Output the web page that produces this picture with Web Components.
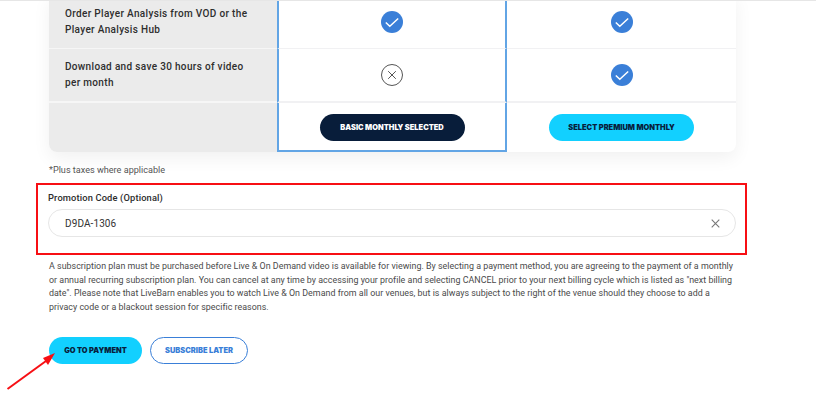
<!DOCTYPE html>
<html><head><meta charset="utf-8"><style>
html,body{margin:0;height:414px;overflow:hidden;background:#fff;font-family:Roboto,sans-serif}
</style></head><body>
<plan-page></plan-page>
<script>
const def=(n,h,init)=>customElements.define(n,class extends HTMLElement{constructor(){super();this.attachShadow({mode:'open'}).innerHTML=h;}connectedCallback(){init&&init(this)}});
const CHECK=`<svg width="22" height="22" viewBox="0 0 22 22"><circle cx="11" cy="11" r="11" fill="#3a7fd8"/><path d="M4.800 11.500l4 3.800 8.400-7.800" fill="none" stroke="#fff" stroke-width="1.500"/></svg>`;
const CROSS=`<svg width="22" height="22" viewBox="0 0 22 22"><circle cx="11" cy="11" r="10.500" fill="#fff" stroke="#555" stroke-width="1"/><path d="M7.200 7.200l7.600 7.600M14.800 7.200l-7.600 7.600" fill="none" stroke="#555" stroke-width="1"/></svg>`;
def('lb-mark',`<style>:host{display:inline-flex}</style><span id="i" style="display:inline-flex"></span>`,e=>{e.shadowRoot.getElementById('i').innerHTML=e.getAttribute('type')==='cross'?CROSS:CHECK});
def('lb-button',`<style>
:host{display:inline-flex;align-items:center;justify-content:center;box-sizing:border-box;height:27px;border-radius:14px;font:900 7.450px Inter,sans-serif;white-space:nowrap;background:#12d0ff;color:#08203c}
:host([kind=dark]){background:#081d3a;color:#fff}
:host([kind=outline]){background:#fff;color:#3a7fd8;border:1.500px solid #3a7fd8}
</style><slot></slot>`);
def('plan-row',`<style>
:host{display:grid;grid-template-columns:228px 230px 229px;height:var(--h,48px)}
.l{background:#ebebeb;padding:0 20px 0 16px;display:flex;align-items:center;font:500 10px/16px Roboto,sans-serif;letter-spacing:.33px;color:#2e2e2e;border-bottom:var(--b,1px) solid #f6f6f6}
.c{display:flex;align-items:center;justify-content:center;border-bottom:var(--b,1px) solid #f1f1f3}
.m{border-left:2px solid #62a5e5;border-right:2px solid #62a5e5}
:host([last]) .l,:host([last]) .c{border-bottom:0}
:host([last]) .l{border-bottom-left-radius:8px}
:host([last]) .m{border-bottom:2px solid #62a5e5;padding-top:2px}
</style><div class="l"><slot name="label"></slot></div><div class="c m"><slot name="basic"></slot></div><div class="c"><slot name="premium"></slot></div>`);
def('plan-table',`<style>
:host{display:block;width:687px;margin-top:-5px;background:#fff;border-radius:0 0 8px 8px;box-shadow:0 6px 18px rgba(0,0,0,.06)}
</style><slot></slot>`);
def('promo-field',`<style>
:host{display:block;box-sizing:border-box;margin:0 -11px 0 -13px;height:72px;border:2px solid #f70f14;padding:6px 9px 0 10px}
.t{font:500 9.300px/13px Roboto,sans-serif;letter-spacing:.15px;color:#2c2c2c}
.f{margin-top:5px;box-sizing:border-box;height:28px;border:1px solid #e6e6e6;border-radius:14px;display:flex;align-items:center;justify-content:space-between;padding:0 15px 0 16px;font:400 10px Roboto,sans-serif;letter-spacing:.1px;color:#333}
svg{display:block}
</style><div class="t">Promotion Code (Optional)</div><div class="f"><span>D9DA-1306</span><svg width="9" height="9" viewBox="0 0 9 9"><path d="M.7.7l7.600 7.600M8.300.7L.7 8.300" stroke="#777" stroke-width="1.100" fill="none"/></svg></div>`);
def('plan-page',`<style>
:host{display:block;position:relative;height:414px;overflow:hidden;box-sizing:border-box;width:816px}
.wrap{width:687px;margin-left:49px}
.top{position:absolute;left:0;top:0;width:816px;height:1px;background:#e6e6e6;z-index:2}
.tax{font:400 9.100px/13px Roboto,sans-serif;color:#555;margin:12px 0 6px}
.legal{font:400 8.900px/13.500px Roboto,sans-serif;letter-spacing:.02px;color:#4a4a4a;margin:5px 0 0;white-space:nowrap}
.btns{display:flex;gap:8px;margin-top:23px}
.arrow{position:absolute;left:0;top:330px}
</style>
<div class="top"></div>
<div class="wrap">
<plan-table>
<plan-row style="--h:54px"><span slot="label">Order Player Analysis from VOD or the Player Analysis Hub</span><lb-mark slot="basic"></lb-mark><lb-mark slot="premium"></lb-mark></plan-row>
<plan-row style="--h:54px;--b:2px"><span slot="label">Download and save 30 hours of video per month</span><lb-mark slot="basic" type="cross"></lb-mark><lb-mark slot="premium"></lb-mark></plan-row>
<plan-row style="--h:49px" last><span slot="label"></span><lb-button slot="basic" kind="dark" style="width:145px">BASIC MONTHLY SELECTED</lb-button><lb-button slot="premium" style="width:145px">SELECT PREMIUM MONTHLY</lb-button></plan-row>
</plan-table>
<div class="tax">*Plus taxes where applicable</div>
<promo-field></promo-field>
<p class="legal">A subscription plan must be purchased before Live &amp; On Demand video is available for viewing. By selecting a payment method, you are agreeing to the payment of a monthly<br>or annual recurring subscription plan. You can cancel at any time by accessing your profile and selecting CANCEL prior to your next billing cycle which is listed as "next billing<br>date". Please note that LiveBarn enables you to watch Live &amp; On Demand from all our venues, but is always subject to the right of the venue should they choose to add a<br>privacy code or a blackout session for specific reasons.</p>
<div class="btns"><lb-button style="width:93px">GO TO PAYMENT</lb-button><lb-button kind="outline" style="width:98px">SUBSCRIBE LATER</lb-button></div>
</div>
<svg class="arrow" width="60" height="62" viewBox="0 0 60 62"><path d="M7.500 59L46 31" stroke="#f70f14" stroke-width="2" fill="none"/><path d="M55 23L43 28L48 35Z" fill="#f70f14"/></svg>`);
</script></body></html>
